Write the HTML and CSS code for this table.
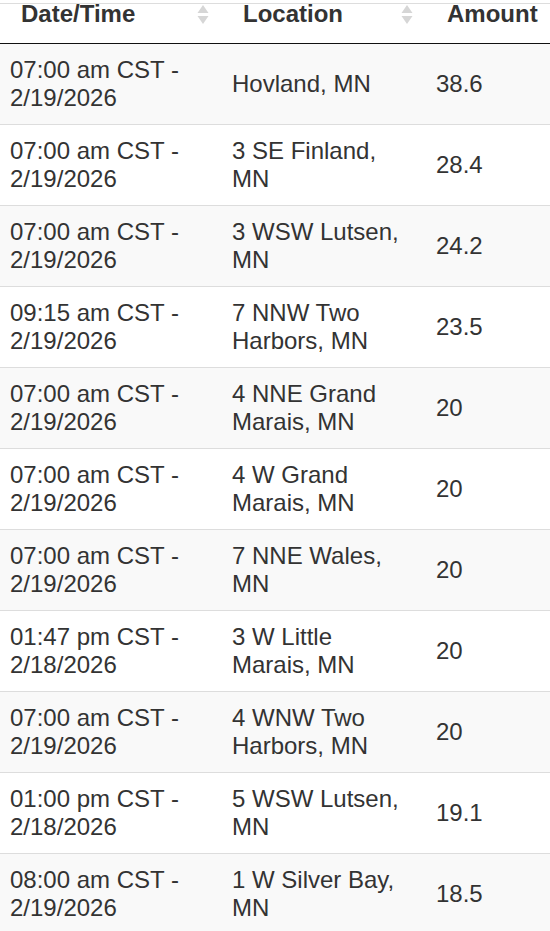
FILE: index.html
```html
<!DOCTYPE html>
<html>
<head>
<meta charset="utf-8">
<link rel="stylesheet" href="styles.css">
</head>
<body>
<div class="wrap">
<table class="reports">
  <colgroup>
    <col class="c-date">
    <col class="c-loc">
    <col class="c-amt">
  </colgroup>
  <thead>
    <tr>
      <th><div class="th-in"><span>Date/Time</span><svg class="sort" width="12" height="20" viewBox="0 0 12 20"><polygon points="6,0 11.5,8 0.5,8" /><polygon points="0.5,11 11.5,11 6,19" /></svg></div></th>
      <th><div class="th-in"><span>Location</span><svg class="sort" width="12" height="20" viewBox="0 0 12 20"><polygon points="6,0 11.5,8 0.5,8" /><polygon points="0.5,11 11.5,11 6,19" /></svg></div></th>
      <th><div class="th-in"><span>Amount</span></div></th>
    </tr>
  </thead>
  <tbody>
    <tr><td>07:00 am CST - 2/19/2026</td><td>Hovland, MN</td><td>38.6</td></tr>
    <tr><td>07:00 am CST - 2/19/2026</td><td>3 SE Finland, MN</td><td>28.4</td></tr>
    <tr><td>07:00 am CST - 2/19/2026</td><td>3 WSW Lutsen, MN</td><td>24.2</td></tr>
    <tr><td>09:15 am CST - 2/19/2026</td><td>7 NNW Two Harbors, MN</td><td>23.5</td></tr>
    <tr><td>07:00 am CST - 2/19/2026</td><td>4 NNE Grand Marais, MN</td><td>20</td></tr>
    <tr><td>07:00 am CST - 2/19/2026</td><td>4 W Grand Marais, MN</td><td>20</td></tr>
    <tr><td>07:00 am CST - 2/19/2026</td><td>7 NNE Wales, MN</td><td>20</td></tr>
    <tr><td>01:47 pm CST - 2/18/2026</td><td>3 W Little Marais, MN</td><td>20</td></tr>
    <tr><td>07:00 am CST - 2/19/2026</td><td>4 WNW Two Harbors, MN</td><td>20</td></tr>
    <tr><td>01:00 pm CST - 2/18/2026</td><td>5 WSW Lutsen, MN</td><td>19.1</td></tr>
    <tr><td>08:00 am CST - 2/19/2026</td><td>1 W Silver Bay, MN</td><td>18.5</td></tr>
  </tbody>
</table>
</div>
</body>
</html>
```
FILE: styles.css
```css
html, body {
  margin: 0;
  padding: 0;
  background: #fff;
}
body {
  font-family: "Liberation Sans", Arial, sans-serif;
  font-size: 24px;
  color: #333;
  overflow: hidden;
}
.wrap {
  padding-top: 3px;
  width: 550px;
  overflow: hidden;
}
.reports {
  width: 550px;
  table-layout: fixed;
  border-collapse: separate;
  border-spacing: 0;
  border-top: 1px solid #ddd;
}
.c-date { width: 222px; }
.c-loc { width: 204px; }
.c-amt { width: 124px; }

.reports th {
  text-align: left;
  font-weight: bold;
  vertical-align: top;
  line-height: 20px;
  padding: 0 13px 18px 21px;
  border-bottom: 1px solid #111;
}
.th-in {
  display: flex;
  justify-content: space-between;
  align-items: flex-start;
}
.sort {
  margin-top: 1px;
  flex: none;
}
.sort polygon {
  fill: #d6d6d6;
}
.reports td {
  padding: 12px 10px;
  line-height: 28px;
  vertical-align: middle;
  border-top: 1px solid #ddd;
}
.reports tbody tr:first-child td {
  border-top: none;
}
.reports tbody tr:nth-child(odd) td {
  background: #f9f9f9;
}
```
